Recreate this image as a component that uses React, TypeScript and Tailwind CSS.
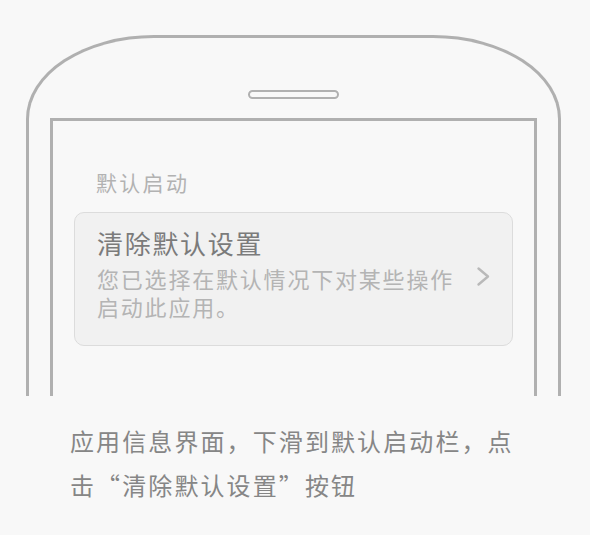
import React from 'react';

const cjk = { fontFamily: '"Noto Sans CJK SC", "Noto Sans", sans-serif' };

function Chevron() {
  return (
    <svg width="15" height="21" viewBox="0 0 15 21" className="shrink-0">
      <polyline points="2.5,2.5 12,10.5 2.5,18.5" fill="none" stroke="#b9b9b9" strokeWidth="2.4" strokeLinecap="round" strokeLinejoin="round" />
    </svg>
  );
}

export default function App() {
  return (
    <div className="w-[590px] h-[535px] bg-[#f8f8f8] overflow-hidden" style={cjk}>
      {/* phone frame, cut off at the bottom */}
      <div className="h-[396px] overflow-hidden pt-[35px] pl-[26px]">
        <div className="w-[535px] h-[420px] border-[3px] border-b-0 border-[#b0b0b0] rounded-t-[128px_84px] flex flex-col items-center pt-[52px]">
          <div className="w-[91px] h-[9px] rounded-full border-2 border-[#b0b0b0]" />
          <div className="self-stretch mx-[21px] mt-[19px] flex-1 border-[3px] border-b-0 border-[#b0b0b0] pt-[47px] px-[21px]">
            <div className="pl-[22px] text-[21px] leading-[28px] tracking-[2.3px] text-[#b2b2b2]">默认启动</div>
            <div className="mt-[16px] rounded-[10px] border border-[#dcdcdc] bg-[#f1f1f1] pl-[22px] pr-[21px] pt-[13px] pb-[25px] flex items-center">
              <div className="flex-1">
                <div className="text-[26px] leading-[34px] tracking-[1.7px] text-[#7b7b7b]">清除默认设置</div>
                <div className="mt-[4px] w-[368px] text-[22px] leading-[28px] tracking-[1.8px] text-[#b4b4b4]">
                  您已选择在默认情况下对某些操作启动此应用。
                </div>
              </div>
              <div className="mt-[6px]">
                <Chevron />
              </div>
            </div>
          </div>
        </div>
      </div>
      {/* caption */}
      <div className="pt-[23px] pl-[70px] w-[530px] text-[24px] leading-[44px] tracking-[2.1px] text-[#868686]">
        应用信息界面，下滑到默认启动栏，点击“清除默认设置”按钮
      </div>
    </div>
  );
}
